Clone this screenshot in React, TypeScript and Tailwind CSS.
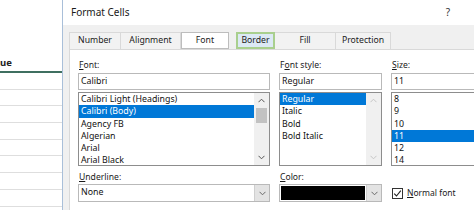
const Chevron = ({ dir, color = "#5a5a5a" }: { dir: "up" | "down"; color?: string }) => (
  <svg width="7" height="5" viewBox="0 0 7 5">
    <path
      d={dir === "up" ? "M0.5 4.2 L3.5 1.2 L6.5 4.2" : "M0.5 0.8 L3.5 3.8 L6.5 0.8"}
      fill="none"
      stroke={color}
      strokeWidth="1"
    />
  </svg>
);

const Label = ({ pre, u, post }: { pre?: string; u: string; post: string }) => (
  <div className="h-[12px] leading-[12px] text-[8.6px] text-[#1a1a1a] pl-[1px]">
    {pre}
    <u className="underline-offset-[1px]">{u}</u>
    {post}
  </div>
);

const TextBox = ({ value }: { value: string }) => (
  <div className="mt-[2px] h-[17px] border border-[#b9b9b9] bg-white flex items-center pl-[2px] text-[8.8px] text-[#111]">
    {value}
  </div>
);

const ListBox = ({
  items,
  selected,
  scroll,
}: {
  items: string[];
  selected: number;
  scroll: "active" | "disabled" | "none";
}) => (
  <div className="mt-[2px] h-[74px] border border-[#8d8d8d] bg-white flex overflow-hidden">
    <div className="flex-1 flex flex-col">
      {items.map((it, i) => (
        <div
          key={it}
          className={
            "h-[12.3px] shrink-0 leading-[12.3px] pl-[2px] text-[8.8px] whitespace-nowrap " +
            (i === selected ? "bg-[#0078d7] text-white" : "text-[#111]")
          }
        >
          {it}
        </div>
      ))}
    </div>
    {scroll !== "none" && (
      <div className="w-[15px] shrink-0 bg-[#f0f0f0] flex flex-col items-center">
        <div className="h-[15px] flex items-center justify-center">
          <Chevron dir="up" color={scroll === "active" ? "#555" : "#c6c6c6"} />
        </div>
        <div className="flex-1 w-full flex justify-center">
          {scroll === "active" && <div className="w-[11px] h-[15px] bg-[#c2c2c2]" />}
        </div>
        <div className="h-[15px] flex items-center justify-center">
          <Chevron dir="down" color={scroll === "active" ? "#555" : "#c6c6c6"} />
        </div>
      </div>
    )}
  </div>
);

const DropArrow = () => (
  <div className="w-[15px] shrink-0 bg-[#e3e3e3] border-l border-[#cfcfcf] flex items-center justify-center">
    <Chevron dir="down" color="#6a6a6a" />
  </div>
);

export default function App() {
  const tab = "h-full flex items-center justify-center text-[8.7px] text-[#222] border-t border-l border-r border-[#d9d9d9] bg-[#f2f2f2]";

  return (
    <div className="w-[474px] h-[210px] overflow-hidden flex bg-white font-['Noto_Sans',sans-serif]">
      {/* worksheet behind the dialog */}
      <div className="w-[63px] shrink-0 flex flex-col bg-white border-r border-[#a9bfd9]">
        <div className="h-[73px] shrink-0 flex items-end border-b-2 border-[#3f6f60] pb-[4px]">
          <span className="text-[9.5px] font-bold leading-none text-[#222]">ue</span>
        </div>
        {[0, 1, 2, 3, 4, 5, 6, 7].map((r) => (
          <div key={r} className="h-[16.7px] shrink-0 border-b border-[#dedede]" />
        ))}
      </div>

      {/* dialog */}
      <div className="flex-1 flex flex-col min-w-0">
        <div className="h-[25px] shrink-0 bg-white flex items-center justify-between pl-[8px] pr-[24px]">
          <span className="text-[10px] text-[#1a1a1a]">Format Cells</span>
          <span className="text-[10px] text-[#333]">?</span>
        </div>

        <div className="flex-1 bg-[#f0f0f0] pl-[6px] pt-[7px] flex flex-col min-h-0">
          <div className="h-[17px] shrink-0 flex">
            <div className={tab + " w-[52px]"}>Number</div>
            <div className={tab + " w-[60px] border-l-0"}>Alignment</div>
            <div className="w-[48px] h-[17px] flex items-center justify-center text-[8.7px] text-[#222] bg-white border border-[#bdbdbd]">
              Font
            </div>
            <div className="w-[7px]" />
            <div className="w-[39px] h-[17px] flex items-center justify-center text-[8.7px] text-[#222] bg-[#dce9f5] border-2 border-[#a9cf8e]">
              Border
            </div>
            <div className={tab + " w-[61px] border-l-0"}>Fill</div>
            <div className={tab + " w-[55px] border-l-0"}>Protection</div>
          </div>

          <div className="flex-1 bg-white border-t border-l border-[#d9d9d9] pl-[8px] pt-[9px] flex gap-[9px]">
            {/* Font column */}
            <div className="w-[192px] shrink-0 flex flex-col">
              <Label u="F" post="ont:" />
              <TextBox value="Calibri" />
              <ListBox
                items={["Calibri Light (Headings)", "Calibri (Body)", "Agency FB", "Algerian", "Arial", "Arial Black"]}
                selected={1}
                scroll="active"
              />
              <div className="mt-[5px]">
                <Label u="U" post="nderline:" />
              </div>
              <div className="mt-[1px] h-[18px] border border-[#b9b9b9] bg-white flex">
                <div className="flex-1 flex items-center pl-[2px] text-[8.8px] text-[#111]">None</div>
                <DropArrow />
              </div>
            </div>

            {/* Font style column */}
            <div className="w-[103px] shrink-0 flex flex-col">
              <Label pre="F" u="o" post="nt style:" />
              <TextBox value="Regular" />
              <ListBox items={["Regular", "Italic", "Bold", "Bold Italic"]} selected={0} scroll="disabled" />
              <div className="mt-[5px]">
                <Label u="C" post="olor:" />
              </div>
              <div className="mt-[1px] h-[18px] border border-[#b9b9b9] bg-white flex">
                <div className="flex-1 bg-black m-[1px]" />
                <DropArrow />
              </div>
            </div>

            {/* Size column */}
            <div className="w-[100px] shrink-0 flex flex-col">
              <Label u="S" post="ize:" />
              <TextBox value="11" />
              <ListBox items={["8", "9", "10", "11", "12", "14"]} selected={3} scroll="none" />
              <div className="mt-[18px] h-[18px] flex items-center pl-[1px]">
                <div className="w-[11px] h-[11px] border border-[#333] bg-white flex items-center justify-center">
                  <svg width="9" height="9" viewBox="0 0 9 9">
                    <path d="M1.2 4.6 L3.5 7 L7.8 1.6" fill="none" stroke="#222" strokeWidth="1.1" />
                  </svg>
                </div>
                <span className="ml-[4px] text-[8.5px] text-[#1a1a1a]">
                  <u className="underline-offset-[1px]">N</u>ormal font
                </span>
              </div>
            </div>
          </div>
        </div>
      </div>
    </div>
  );
}
